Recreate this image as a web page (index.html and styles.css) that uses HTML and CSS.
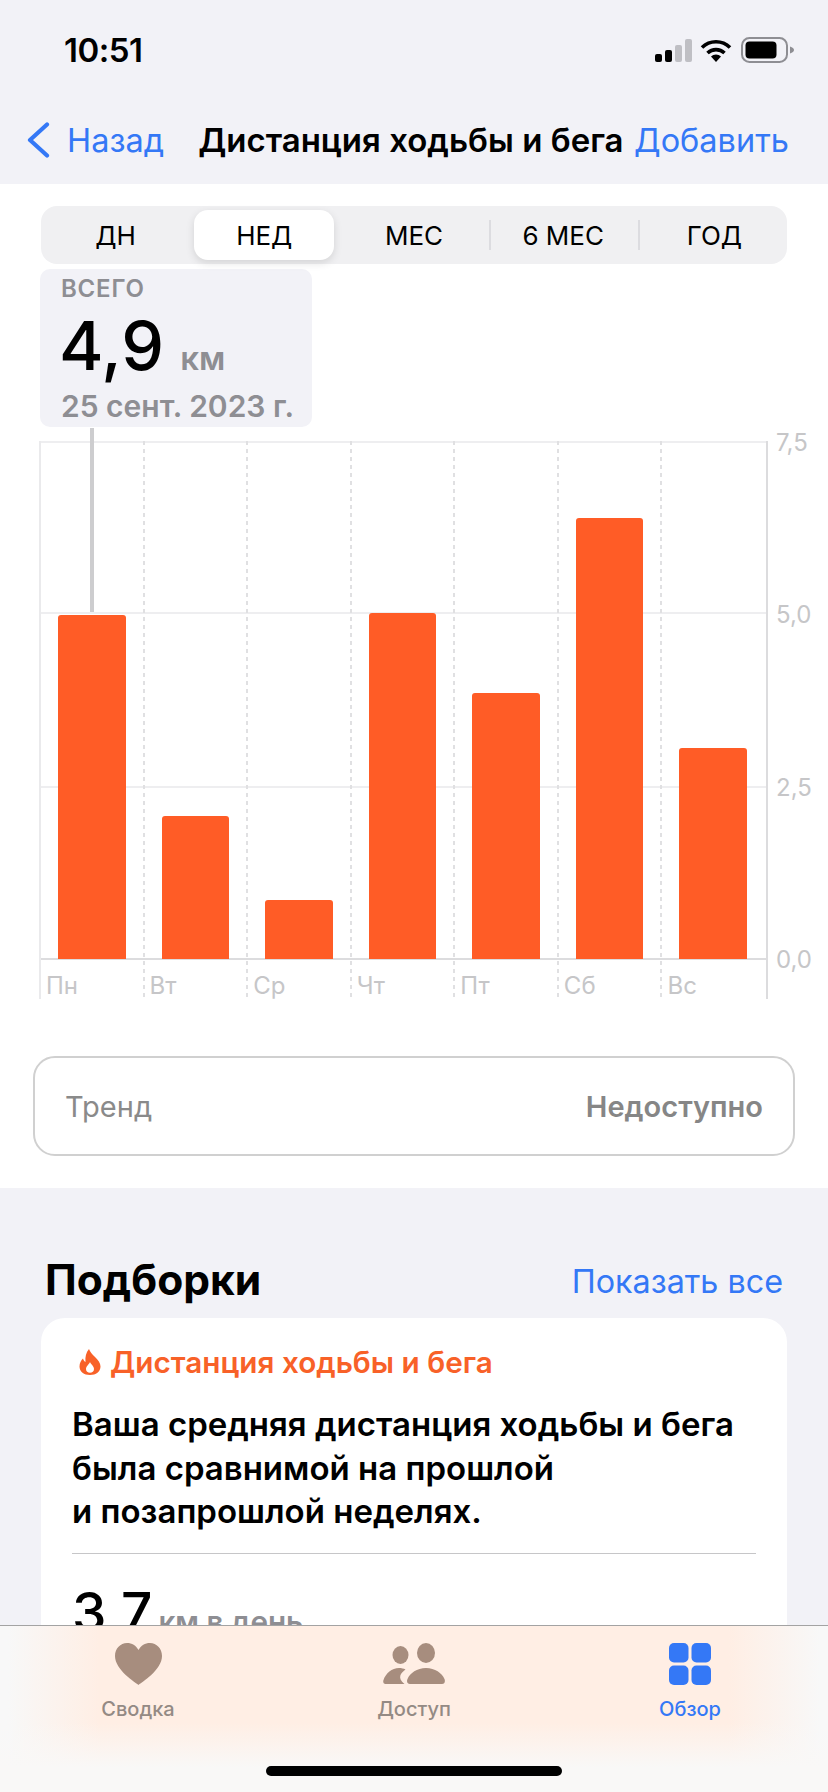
FILE: index.html
```html
<!DOCTYPE html>
<html lang="ru">
<head>
    <meta charset="UTF-8">
    <meta name="viewport" content="width=device-width, initial-scale=1.0">
    <title>Дистанция ходьбы и бега</title>
    <link rel="stylesheet" href="styles.css">
</head>
<body>
<div class="phone">
    <header class="topArea">
        <div class="statusBar">
            <span class="time">10:51</span>
            <div class="statusIcons">
                <svg class="signalIcon" width="38" height="23" viewBox="0 0 38 23">
                    <rect x="0" y="15" width="7" height="8" rx="2" fill="#000"/>
                    <rect x="10" y="11" width="7" height="12" rx="2" fill="#000"/>
                    <rect x="20" y="6" width="7" height="17" rx="2" fill="#bfbfc4"/>
                    <rect x="30" y="0" width="7" height="23" rx="2" fill="#bfbfc4"/>
                </svg>
                <svg width="32" height="23" viewBox="0 0 32 23">
                    <path d="M2 8.5A20 20 0 0 1 30 8.5" fill="none" stroke="#000" stroke-width="3.6"/>
                    <path d="M7.5 14A12.5 12.5 0 0 1 24.5 14" fill="none" stroke="#000" stroke-width="3.6"/>
                    <path d="M16 23L11 17.6A7 7 0 0 1 21 17.6Z" fill="#000"/>
                </svg>
                <svg width="54" height="26" viewBox="0 0 54 26">
                    <rect x="1" y="1" width="45" height="24" rx="7.5" fill="none" stroke="#8e8e93" stroke-width="2"/>
                    <rect x="4.5" y="4.5" width="31" height="17" rx="4" fill="#000"/>
                    <path d="M49 9.5C51.5 10.3 53 11.5 53 13S51.5 15.7 49 16.5Z" fill="#8e8e93"/>
                </svg>
            </div>
        </div>
        <nav class="navBar">
            <svg class="backIcon" width="24" height="36" viewBox="0 0 24 36">
                <path d="M21 2.5L4 18L21 33.5" fill="none" stroke="#3478f6" stroke-width="4.2" stroke-linecap="round" stroke-linejoin="round"/>
            </svg>
            <a class="navLink backLink">Назад</a>
            <h1 class="navTitle">Дистанция ходьбы и бега</h1>
            <a class="navLink addLink">Добавить</a>
        </nav>
    </header>

    <main>
        <section class="chartSection">
            <div class="segments">
                <div class="segment">ДН</div>
                <div class="segment selected">НЕД</div>
                <div class="segment divided">МЕС</div>
                <div class="segment divided">6 МЕС</div>
                <div class="segment">ГОД</div>
            </div>

            <div class="summary">
                <div class="summaryLabel">ВСЕГО</div>
                <div class="summaryValue">4,9 <span class="summaryUnit">км</span></div>
                <div class="summaryDate">25 сент. 2023 г.</div>
            </div>

            <div class="chart">
                <div class="plot">
                    <div class="gridLine lineTop"></div>
                    <div class="gridLine lineFive"></div>
                    <div class="gridLine lineTwo"></div>
                    <div class="gridLine lineZero"></div>
                    <div class="marker"></div>
                    <div class="days">
                        <div class="day">
                            <div class="barArea"><div class="bar" style="height: 344px"></div></div>
                            <div class="dayName">Пн</div>
                        </div>
                        <div class="day">
                            <div class="barArea"><div class="bar" style="height: 143px"></div></div>
                            <div class="dayName">Вт</div>
                        </div>
                        <div class="day">
                            <div class="barArea"><div class="bar" style="height: 59px"></div></div>
                            <div class="dayName">Ср</div>
                        </div>
                        <div class="day">
                            <div class="barArea"><div class="bar" style="height: 346px"></div></div>
                            <div class="dayName">Чт</div>
                        </div>
                        <div class="day">
                            <div class="barArea"><div class="bar" style="height: 266px"></div></div>
                            <div class="dayName">Пт</div>
                        </div>
                        <div class="day">
                            <div class="barArea"><div class="bar" style="height: 441px"></div></div>
                            <div class="dayName">Сб</div>
                        </div>
                        <div class="day">
                            <div class="barArea"><div class="bar" style="height: 211px"></div></div>
                            <div class="dayName">Вс</div>
                        </div>
                    </div>
                </div>
                <div class="yAxis">
                    <span>7,5</span>
                    <span>5,0</span>
                    <span>2,5</span>
                    <span>0,0</span>
                </div>
            </div>

            <div class="trend">
                <span>Тренд</span>
                <span class="trendValue">Недоступно</span>
            </div>
        </section>

        <section class="picks">
            <div class="picksHead">
                <h2 class="picksTitle">Подборки</h2>
                <a class="picksAll">Показать все</a>
            </div>
            <div class="card">
                <div class="cardHead">
                    <svg width="22" height="26" viewBox="0 0 22 26">
                        <path fill-rule="evenodd" d="M10 0C11 3 13 5 16 8C19 11 21.500 14 21.500 17.500C21.500 22.500 17 26 11 26C5 26 .5 22.500 .5 17.500C.5 14 2 11.500 4 9.500C4.500 11.500 5.500 12.500 6.500 13C6 8 7 3.500 10 0ZM11 13C10.500 15 7 17 7 20C7 22.500 8.800 23.800 11 23.800C13.200 23.800 15 22.500 15 20C15 17 12 15.500 11 13Z" fill="#f86128"/>
                    </svg>
                    <span>Дистанция ходьбы и бега</span>
                </div>
                <p class="cardText">Ваша средняя дистанция ходьбы и бега<br>была сравнимой на прошлой<br>и позапрошлой неделях.</p>
                <div class="cardLine"></div>
                <div class="cardValue">3,7<span class="cardUnit">км в день</span></div>
            </div>
        </section>
    </main>

    <footer class="tabBar">
        <div class="tab">
            <svg width="47" height="42" viewBox="0 0 47 42">
                <path d="M23.500 42C20 39 0 27 0 13C0 5.500 5.500 0 12 0C17 0 21 2.500 23.500 7C26 2.500 30 0 35 0C41.500 0 47 5.500 47 13C47 27 27 39 23.500 42Z" fill="#a78d7e"/>
            </svg>
            <span class="tabName">Сводка</span>
        </div>
        <div class="tab">
            <svg width="62" height="42" viewBox="0 0 62 42">
                <ellipse cx="17.500" cy="12" rx="8" ry="9" fill="#a78d7e"/>
                <ellipse cx="43" cy="10" rx="9" ry="10" fill="#a78d7e"/>
                <path d="M3 41C0 41 0 38.500 .5 37C2.500 30.500 9 25 16 25C18.500 25 20.500 25.500 22.500 26.500C17.500 30 14 35 21.500 41Z" fill="#a78d7e"/>
                <path d="M27 41C24 41 23.500 38 24.500 36C27 30 34 25 43 25C52 25 59 30 61.500 36C62.500 38.500 61.500 41 59 41Z" fill="#a78d7e"/>
            </svg>
            <span class="tabName">Доступ</span>
        </div>
        <div class="tab active">
            <svg width="42" height="42" viewBox="0 0 42 42">
                <rect x="0" y="0" width="19.500" height="19.500" rx="5" fill="#3478f6"/>
                <rect x="22.500" y="0" width="19.500" height="19.500" rx="5" fill="#3478f6"/>
                <rect x="0" y="22.500" width="19.500" height="19.500" rx="5" fill="#3478f6"/>
                <rect x="22.500" y="22.500" width="19.500" height="19.500" rx="5" fill="#3478f6"/>
            </svg>
            <span class="tabName">Обзор</span>
        </div>
        <div class="homeBar"></div>
    </footer>
</div>
</body>
</html>
```

FILE: styles.css
```css
* {
    box-sizing: border-box;
}
html, body {
    margin: 0;
    padding: 0;
}
body {
    font-family: Inter, "Noto Sans", sans-serif;
    color: #000;
    background-color: #f2f2f7;
}
.phone {
    position: relative;
    width: 828px;
    height: 1792px;
    overflow: hidden;
    background-color: #f2f2f7;
}

/* top */
.topArea {
    height: 184px;
}
.statusBar {
    display: flex;
    justify-content: space-between;
    align-items: center;
    height: 100px;
    padding: 0 33px 0 64px;
}
.time {
    font-size: 33px;
    font-weight: 600;
    letter-spacing: -0.5px;
}
.statusIcons {
    display: flex;
    align-items: center;
    gap: 9px;
}
.signalIcon {
    margin-right: -2px;
}
.navBar {
    display: flex;
    align-items: center;
    height: 80px;
    padding: 0 39px 0 26px;
}
.backIcon {
    margin-right: 17px;
}
.navLink {
    font-size: 32.500px;
    color: #3478f6;
}
.navTitle {
    margin: 0 0 0 34px;
    font-size: 33px;
    font-weight: 600;
}
.addLink {
    margin-left: auto;
}

/* chart */
.chartSection {
    height: 1004px;
    padding-top: 22px;
    background-color: #fff;
}
.segments {
    display: grid;
    grid-template-columns: repeat(5, 1fr);
    height: 58px;
    margin: 0 41px;
    border-radius: 16px;
    background-color: #f0f0f2;
}
.segment {
    position: relative;
    display: flex;
    justify-content: center;
    align-items: center;
    font-size: 26px;
}
.segment:last-child {
    padding-left: 4px;
}
.segment.selected {
    margin: 4px 5px 4px 4px;
    border-radius: 14px;
    background-color: #fff;
    box-shadow: 0 3px 8px rgba(0, 0, 0, 0.12);
}
.segment.divided::after {
    content: "";
    position: absolute;
    top: 14px;
    right: -2px;
    width: 2px;
    height: 30px;
    background-color: #dcdce0;
}
.summary {
    width: 272px;
    height: 158px;
    margin: 5px 0 14px 40px;
    padding-left: 21px;
    border-radius: 10px;
    background-color: #f2f2f7;
}
.summaryLabel {
    padding-top: 6px;
    font-size: 24px;
    line-height: 28px;
    font-weight: 600;
    letter-spacing: 0.8px;
    color: #8e8e93;
}
.summaryValue {
    margin-left: -2px;
    padding-top: 4px;
    font-size: 68px;
    line-height: 76px;
    font-weight: 500;
}
.summaryUnit {
    margin-left: -2px;
    font-size: 33px;
    font-weight: 600;
    color: #8e8e93;
}
.summaryDate {
    margin-top: -7px;
    font-size: 30px;
    line-height: 34px;
    font-weight: 600;
    color: #8e8e93;
}
.chart {
    display: flex;
    margin-left: 39px;
}
.plot {
    position: relative;
    width: 729px;
    height: 558px;
    border-left: 2px solid #eaeaec;
    border-right: 2px solid #dcdcde;
}
.gridLine {
    position: absolute;
    left: 0;
    right: 0;
    height: 2px;
    background-color: #eeeef0;
}
.lineTop {
    top: 0;
}
.lineFive {
    top: 171px;
}
.lineTwo {
    top: 345px;
}
.lineZero {
    top: 517px;
    background-color: #dcdcde;
}
.marker {
    position: absolute;
    top: -13px;
    left: 49px;
    z-index: 2;
    width: 4px;
    height: 184px;
    background-color: #cdcdcf;
}
.days {
    position: relative;
    display: grid;
    grid-template-columns: repeat(7, 1fr);
    height: 100%;
}
.day {
    background: repeating-linear-gradient(#e0e0e2 0 4px, transparent 4px 8px) right top / 2px 100% no-repeat;
}
.day:last-child {
    background: none;
}
.barArea {
    display: flex;
    align-items: flex-end;
    height: 518px;
    padding: 0 19px 0 17px;
}
.bar {
    width: 100%;
    border-radius: 3px 3px 0 0;
    background-color: #ff5c26;
}
.dayName {
    padding: 12px 0 0 5px;
    font-size: 24px;
    line-height: 30px;
    color: #c6c6c8;
}
.yAxis {
    display: flex;
    flex-direction: column;
    justify-content: space-between;
    height: 519px;
    padding-top: 2px;
    margin-left: 8px;
    font-size: 24px;
    color: #c6c6c8;
}
.yAxis span {
    height: 0;
    line-height: 0;
}
.trend {
    display: flex;
    justify-content: space-between;
    align-items: center;
    height: 100px;
    margin: 57px 33px 0;
    padding: 0 30px;
    border: 2px solid #d0d0d0;
    border-radius: 22px;
    font-size: 29px;
    color: #8a8a8a;
}
.trendValue {
    font-weight: 600;
    color: #868686;
}

/* picks */
.picks {
    padding: 62px 41px 0;
}
.picksHead {
    display: flex;
    justify-content: space-between;
    align-items: center;
    height: 58px;
    margin-bottom: 10px;
    padding: 0 4px 0 4px;
}
.picksTitle {
    margin: 0;
    font-size: 42.500px;
    font-weight: 700;
}
.picksAll {
    padding-top: 4px;
    font-size: 32.300px;
    color: #3478f6;
}
.card {
    height: 600px;
    padding: 27px 31px 0;
    border-radius: 24px;
    background-color: #fff;
}
.cardHead {
    display: flex;
    align-items: center;
    gap: 9px;
    height: 34px;
    padding-left: 7px;
    font-size: 29.700px;
    font-weight: 600;
    color: #f86128;
}
.cardText {
    margin: 24px 0 0;
    font-size: 33px;
    line-height: 43.500px;
    font-weight: 600;
}
.cardLine {
    height: 1px;
    margin-top: 19px;
    background-color: #c6c6c8;
}
.cardValue {
    margin-top: 24px;
    font-size: 55px;
    line-height: 68px;
    font-weight: 500;
}
.cardUnit {
    margin-left: 6px;
    font-size: 29.700px;
    font-weight: 600;
    color: #8e8e93;
}

/* tabs */
.tabBar {
    position: absolute;
    left: 0;
    right: 0;
    bottom: 0;
    display: grid;
    grid-template-columns: repeat(3, 1fr);
    height: 167px;
    padding-top: 17px;
    border-top: 1px solid #a3a3a3;
    background:
        linear-gradient(to bottom, transparent 58%, #f9f8f7 85%),
        linear-gradient(to right, #f8f8f8 1%, #ffeee4 12%, #ffeee4 88%, #f8f8f8 99%);
}
.tab {
    display: flex;
    flex-direction: column;
    align-items: center;
}
.tabName {
    margin-top: 10px;
    font-size: 20px;
    line-height: 28px;
    font-weight: 500;
    color: #948a84;
}
.tab.active .tabName {
    color: #3478f6;
}
.homeBar {
    position: absolute;
    left: 266px;
    bottom: 16px;
    width: 296px;
    height: 10px;
    border-radius: 5px;
    background-color: #000;
}
```
